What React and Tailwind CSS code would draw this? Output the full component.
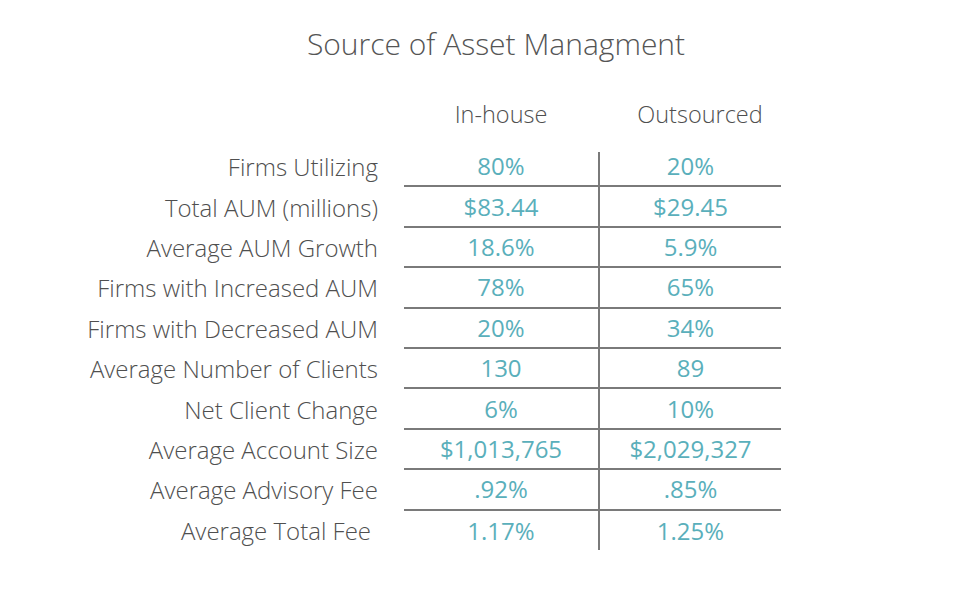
const rows = [
  { label: 'Firms Utilizing', a: '80%', b: '20%' },
  { label: 'Total AUM (millions)', a: '$83.44', b: '$29.45' },
  { label: 'Average AUM Growth', a: '18.6%', b: '5.9%' },
  { label: 'Firms with Increased AUM', a: '78%', b: '65%' },
  { label: 'Firms with Decreased AUM', a: '20%', b: '34%' },
  { label: 'Average Number of Clients', a: '130', b: '89' },
  { label: 'Net Client Change', a: '6%', b: '10%' },
  { label: 'Average Account Size', a: '$1,013,765', b: '$2,029,327' },
  { label: 'Average Advisory Fee', a: '.92%', b: '.85%' },
  { label: 'Average Total Fee', a: '1.17%', b: '1.25%', last: true },
];

const App = () => {
  return (
    <div
      className="w-[976px] h-[607px] bg-white flex flex-col font-light"
      style={{ fontFamily: '"Open Sans", Lato, sans-serif' }}
    >
      {/* Title */}
      <div className="pl-4 pt-[24px] h-[98px] text-center text-[30px] text-[#555] leading-[40px]">
        Source of Asset Managment
      </div>

      {/* Column headers */}
      <div className="flex h-[49px] text-[23.5px] text-[#4f4f4f] leading-[32px]">
        <div className="w-[404px]" />
        <div className="w-[194px] text-center">In-house</div>
        <div className="w-[2px]" />
        <div className="w-[200px] text-center">Outsourced</div>
      </div>

      {/* Table */}
      <div className="flex">
        <div className="w-[378px] flex flex-col text-[24px] text-[#4f4f4f]">
          {rows.map((r) => (
            <div
              key={r.label}
              className={`h-[40.4px] flex items-center justify-end leading-none ${r.last ? 'pr-[7px]' : ''}`}
            >
              {r.label}
            </div>
          ))}
        </div>
        <div className="w-[26px]" />
        <div className="w-[194px] flex flex-col text-[24px] font-normal text-[#5aafbb]">
          {rows.map((r) => (
            <div
              key={r.label}
              className={`h-[40.4px] flex items-center justify-center leading-none ${r.last ? '' : 'border-b-2 border-[#7a7a7a]'}`}
            >
              {r.a}
            </div>
          ))}
        </div>
        <div className="w-[2px] mt-[5px] h-[398px] bg-[#7a7a7a]" />
        <div className="w-[181px] flex flex-col text-[24px] font-normal text-[#5aafbb]">
          {rows.map((r) => (
            <div
              key={r.label}
              className={`h-[40.4px] flex items-center justify-center leading-none ${r.last ? '' : 'border-b-2 border-[#7a7a7a]'}`}
            >
              {r.b}
            </div>
          ))}
        </div>
      </div>
    </div>
  );
};

export default App;
